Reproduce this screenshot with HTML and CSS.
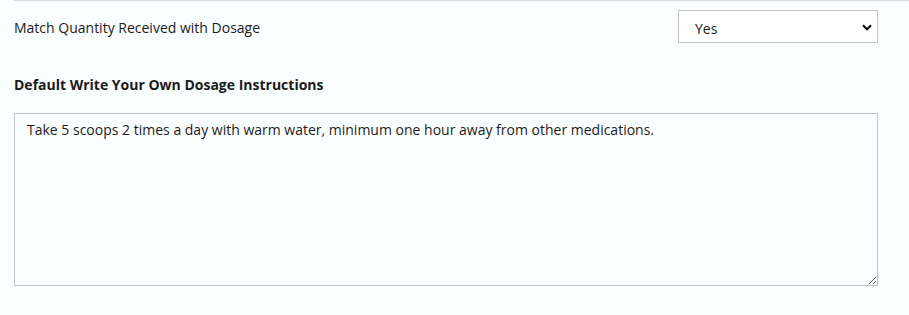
FILE: index.html
```html
<!DOCTYPE html>
<html lang="en">
<head>
<meta charset="utf-8">
<title>Dosage settings</title>
<link rel="stylesheet" href="styles.css">
</head>
<body>
<div class="panel">
  <div class="row">
    <label class="row-label" for="match">Match Quantity Received with Dosage</label>
    <div class="select-wrap">
      <select id="match" class="select">
        <option>Yes</option>
        <option>No</option>
      </select>
      <svg class="chev" width="10" height="7" viewBox="0 0 10 7" aria-hidden="true"><path d="M1 1.2 L5 5.2 L9 1.2" fill="none" stroke="#111" stroke-width="2.2"/></svg>
    </div>
  </div>
  <div class="section">
    <label class="section-label" for="instr">Default Write Your Own Dosage Instructions</label>
    <textarea id="instr" class="textarea">Take 5 scoops 2 times a day with warm water, minimum one hour away from other medications.</textarea>
  </div>
</div>
</body>
</html>
```
FILE: styles.css
```css
html, body {
  margin: 0;
  padding: 0;
  background: #f9fdfd;
}
body {
  font-family: "Open Sans", "Liberation Sans", sans-serif;
  font-size: 14px;
  color: #1b1b1b;
}
.panel {
  margin-left: 14px;
  border-top: 1px solid #dedede;
}
.row {
  display: flex;
  justify-content: space-between;
  align-items: center;
  padding: 9px 31px 0 0;
}
.row-label {
  line-height: 20px;
  padding-top: 2px;
}
.select-wrap {
  position: relative;
  width: 200px;
  height: 33px;
}
.select {
  appearance: none;
  -webkit-appearance: none;
  box-sizing: border-box;
  width: 200px;
  height: 33px;
  margin: 0;
  padding: 3px 30px 0 16px;
  border: 1px solid #c4c4c4;
  border-radius: 0;
  background: #ffffff;
  font-family: inherit;
  font-size: 14px;
  color: #1b1b1b;
}
.chev {
  position: absolute;
  right: 6px;
  top: 14px;
  pointer-events: none;
}
.section {
  display: flex;
  flex-direction: column;
  padding: 32px 31px 0 0;
}
.section-label {
  font-weight: 700;
  line-height: 20px;
  margin-bottom: 18px;
}
.textarea {
  box-sizing: border-box;
  display: block;
  width: 864px;
  height: 173px;
  margin: 0;
  padding: 6px 12px;
  border: 1px solid #c4c4c4;
  border-radius: 0;
  background: #fbfefe;
  font-family: inherit;
  font-size: 14px;
  line-height: 20px;
  color: #1b1b1b;
  resize: vertical;
}
```
